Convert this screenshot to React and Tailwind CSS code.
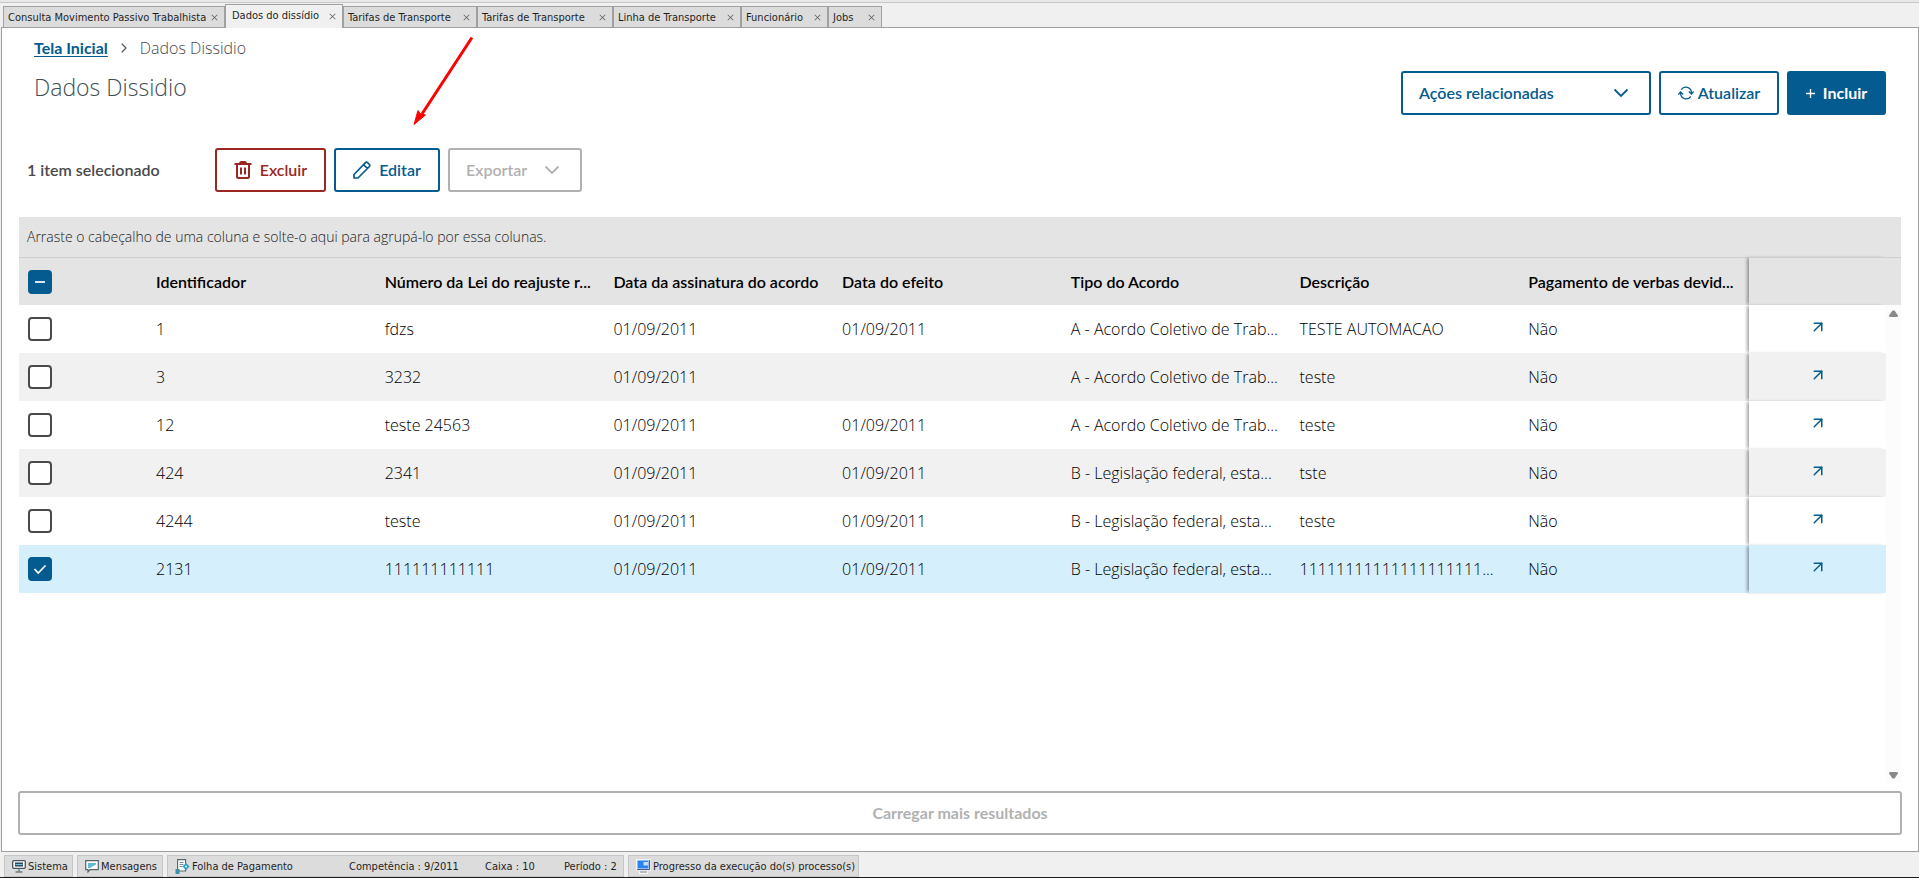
import { FiArrowUpRight } from 'react-icons/fi';
import { VscChromeClose } from 'react-icons/vsc';

const tabs = [
  { label: 'Consulta Movimento Passivo Trabalhista', width: 'w-[222px]' },
  { label: 'Dados do dissídio', width: 'w-[118px]', active: true },
  { label: 'Tarifas de Transporte', width: 'w-[134px]' },
  { label: 'Tarifas de Transporte', width: 'w-[136px]' },
  { label: 'Linha de Transporte', width: 'w-[128px]' },
  { label: 'Funcionário', width: 'w-[87px]' },
  { label: 'Jobs', width: 'w-[54px]' },
];

const columns = [
  'Identificador',
  'Número da Lei do reajuste r...',
  'Data da assinatura do acordo',
  'Data do efeito',
  'Tipo do Acordo',
  'Descrição',
  'Pagamento de verbas devid...',
];

const rows = [
  ['1', 'fdzs', '01/09/2011', '01/09/2011', 'A - Acordo Coletivo de Trab...', 'TESTE AUTOMACAO', 'Não'],
  ['3', '3232', '01/09/2011', '', 'A - Acordo Coletivo de Trab...', 'teste', 'Não'],
  ['12', 'teste 24563', '01/09/2011', '01/09/2011', 'A - Acordo Coletivo de Trab...', 'teste', 'Não'],
  ['424', '2341', '01/09/2011', '01/09/2011', 'B - Legislação federal, esta...', 'tste', 'Não'],
  ['4244', 'teste', '01/09/2011', '01/09/2011', 'B - Legislação federal, esta...', 'teste', 'Não'],
  ['2131', '111111111111', '01/09/2011', '01/09/2011', 'B - Legislação federal, esta...', '11111111111111111111...', 'Não'],
];

const selectedId = '2131';

function Chevron() {
  return (
    <svg width="16" height="10" viewBox="0 0 16 10" fill="none" stroke="currentColor" strokeWidth="1.8">
      <path d="M1.5 1.5 8 8l6.5-6.5" />
    </svg>
  );
}

function TrashIcon() {
  return (
    <svg width="18" height="18" viewBox="0 0 18 18" fill="none" stroke="currentColor" strokeWidth="2">
      <path d="M.5 3h17M3 3v12.5c0 1 .5 1.5 1.5 1.5h9c1 0 1.5-.5 1.5-1.5V3" />
      <path d="M6 2.5C6 1.500 6.500 1 7.500 1h3c1 0 1.500.5 1.500 1.500M7 6.500v7M11 6.500v7" />
    </svg>
  );
}

function PencilIcon() {
  return (
    <svg width="18" height="18" viewBox="0 0 18 18" fill="none" stroke="currentColor" strokeWidth="1.7" strokeLinejoin="round">
      <path d="M1 17v-3.500L12.500 1.600c.6-.6 1.400-.6 2 0l1.900 1.900c.6.6.6 1.400 0 2L5 17H1zM10.500 3.600l3.900 3.900" />
    </svg>
  );
}

function RefreshIcon() {
  return (
    <svg width="16" height="14" viewBox="0 0 16 14" fill="none" stroke="currentColor" strokeWidth="1.3">
      <path d="M3.200 3.600A5.600 5.600 0 0 1 13.400 7M12.800 10.400A5.600 5.600 0 0 1 2.600 7" />
      <path d="M10.800 5.600l2.600 2.400 2.200-2.600M.4 8.600L2.600 6l2.600 2.400" />
    </svg>
  );
}

function MonitorIcon() {
  return (
    <svg width="14" height="13" viewBox="0 0 14 13">
      <rect x=".7" y=".7" width="12.6" height="7.6" rx="1" fill="#fff" stroke="#46535c" strokeWidth="1.3" />
      <rect x="3" y="2.5" width="8" height="4" fill="#2b4a5c" />
      <path d="M3.500 4.500h7" stroke="#6fc0dc" />
      <path d="M7 8.500v3M3.500 12h7" stroke="#6b7a83" strokeWidth="1.4" />
    </svg>
  );
}

function MessageIcon() {
  return (
    <svg width="14" height="13" viewBox="0 0 14 13">
      <path d="M.7.7h12.600v9H5L3 12V9.700H.7z" fill="#fff" stroke="#54646d" strokeWidth="1.2" />
      <path d="M3 3h8v1.500L5 8H3z" fill="#62b9d3" />
    </svg>
  );
}

function PayrollIcon() {
  return (
    <svg width="15" height="15" viewBox="0 0 15 15">
      <path d="M2.600.6h8V12h-8z" fill="#fff" stroke="#54646d" strokeWidth="1.1" />
      <path d="M4.500 3.500h4M4.500 5.500h4M4.500 7.500h3" stroke="#7c8a92" />
      <path d="M11 4.500 14 7.500l-3 3-3-3z" fill="#18a0c8" stroke="#18a0c8" strokeLinejoin="round" />
      <circle cx="11" cy="7.5" r="1" fill="#fff" />
      <rect x=".5" y="10" width="4" height="5" fill="#3393ad" />
    </svg>
  );
}

function ProgressIcon() {
  return (
    <svg width="15" height="15" viewBox="0 0 15 15">
      <path d="M0 0h15v12h-3v3H3v-3H0z" fill="#f4f6f8" />
      <rect x="1.5" y="1.5" width="11" height="8" fill="#2b84ee" />
      <path d="M7.500 3h4.500v3.500H7.500z" fill="#cfdce8" />
      <path d="M13.600 1v9.600H1" fill="none" stroke="#3d4a78" />
      <path d="M4 13h7" stroke="#b3bcc4" strokeWidth="2" />
    </svg>
  );
}

function TabStrip() {
  return (
    <div className="relative z-10 flex h-6 items-start pl-[3px]">
      {tabs.map((tab, i) => (
        <div
          key={i}
          className={`flex items-center justify-between border border-b-0 border-[#a0a0a0] pr-[5px] ${tab.width} ${
            tab.active ? 'h-6 bg-[#f0f0f0] pb-px pl-[6px]' : 'mt-[2px] h-[21px] bg-[#dcdcdc] pt-px pl-1'
          }`}
        >
          <button className="whitespace-nowrap text-[#1f1f1f]">{tab.label}</button>
          <button aria-label="Fechar" className="text-[#5c5c5c]">
            <VscChromeClose size={9} />
          </button>
        </div>
      ))}
    </div>
  );
}

function Header() {
  return (
    <div className="flex items-start justify-between px-8">
      <div>
        <nav className="flex items-center pt-2 leading-6">
          <a href="#" className="font-['Lato',sans-serif] font-bold text-[#045b8f] underline underline-offset-2">
            Tela Inicial
          </a>
          <svg className="mx-[13px] text-[#5a5a5a]" width="6" height="10" viewBox="0 0 6 10" fill="none" stroke="currentColor" strokeWidth="1.3">
            <path d="M.8.8 5 5 .8 9.200" />
          </svg>
          <span className="font-light text-[#4a4a4a]">Dados Dissidio</span>
        </nav>
        <h1 className="pt-[11px] text-[23px] leading-8 font-light text-[#3f4f55]">Dados Dissidio</h1>
      </div>
      <div className="flex gap-2 pt-[43px] font-['Lato',sans-serif] font-semibold text-[#045b8f]">
        <button className="flex h-11 w-[250px] items-center justify-between rounded-[3px] border-2 border-[#045b8f] pr-5 pl-4">
          Ações relacionadas
          <Chevron />
        </button>
        <button className="flex h-11 w-[120px] items-center justify-center gap-1 rounded-[3px] border-2 border-[#045b8f]">
          <RefreshIcon />
          Atualizar
        </button>
        <button className="flex h-11 w-[99px] items-center justify-center gap-2 rounded-[3px] bg-[#045b8f] font-bold text-white">
          <svg width="9" height="9" viewBox="0 0 9 9" stroke="currentColor" strokeWidth="1.3">
            <path d="M4.500 0v9M0 4.500h9" />
          </svg>
          Incluir
        </button>
      </div>
    </div>
  );
}

function Toolbar() {
  return (
    <div className="flex items-center gap-2 pt-[33px] pb-[25px] pl-[25px] font-['Lato',sans-serif] font-semibold">
      <span className="w-[180px] text-[#4a4a4a]">1 item selecionado</span>
      <button className="flex h-11 w-[111px] items-center justify-center gap-2 rounded-[3px] border-2 border-[#9b2722] text-[#9b2722]">
        <TrashIcon />
        Excluir
      </button>
      <button className="flex h-11 w-[106px] items-center justify-center gap-2 rounded-[3px] border-2 border-[#045b8f] text-[#045b8f]">
        <PencilIcon />
        Editar
      </button>
      <button disabled className="flex h-11 w-[134px] items-center justify-between rounded-[3px] border-2 border-[#b1b1b1] pr-5 pl-4 text-[#b1b1b1]">
        Exportar
        <Chevron />
      </button>
    </div>
  );
}

function Checkbox({ checked, mixed, label }) {
  return (
    <span className="relative block size-6">
      <input
        type="checkbox"
        aria-label={label}
        defaultChecked={checked}
        className="block size-6 appearance-none rounded-[4px] border-2 border-[#4a4a4a] bg-white checked:border-[#045b8f] checked:bg-[#045b8f]"
      />
      {checked && (
        <svg className="pointer-events-none absolute inset-0 text-white" width="24" height="24" viewBox="0 0 24 24" fill="none" stroke="currentColor" strokeWidth="1.7">
          <path d={mixed ? 'M7 12h10' : 'M6.500 12l3.700 4L17.500 8.500'} />
        </svg>
      )}
    </span>
  );
}

function Grid() {
  return (
    <div className="flex flex-1 flex-col">
      <div className="h-10 bg-[#e4e4e4] pl-2 text-[14px] leading-10 font-light text-[#222]">
        Arraste o cabeçalho de uma coluna e solte-o aqui para agrupá-lo por essa colunas.
      </div>
      <div className="flex flex-1 items-stretch">
        <div className="flex-1">
          <table className="w-full table-fixed border-separate border-spacing-0 text-left whitespace-nowrap">
            <thead>
              <tr className="h-12 bg-[#e4e4e4] font-['Lato',sans-serif]">
                <th className="w-[129px] border-t border-[#d0d0d0] pl-[9px]">
                  <Checkbox checked mixed label="Selecionar todos" />
                </th>
                {columns.map((column) => (
                  <th key={column} className="border-t border-[#d0d0d0] px-2 font-semibold text-black">
                    {column}
                  </th>
                ))}
                <th className="w-[137px] border-t border-[#d0d0d0] bg-[#e4e4e4] shadow-[-3px_0_3px_-1px_rgba(0,0,0,0.35)]" />
              </tr>
            </thead>
            <tbody>
              {rows.map((row, i) => {
                const selected = row[0] === selectedId;
                const bg = selected ? 'bg-[#d6effd]' : i % 2 ? 'bg-[#f1f1f1]' : 'bg-white';
                return (
                  <tr key={row[0]} className={`h-12 ${bg}`}>
                    <td className="pl-[9px]">
                      <Checkbox checked={selected} label={`Selecionar ${row[0]}`} />
                    </td>
                    {row.map((value, j) => (
                      <td key={j} className="px-2 font-light text-black">
                        {value}
                      </td>
                    ))}
                    <td className={`pb-1 shadow-[-3px_0_3px_-1px_rgba(0,0,0,0.35)] ${bg}`}>
                      <a href="#" aria-label="Abrir" className="flex justify-center text-[#045b8f]">
                        <FiArrowUpRight size={18} />
                      </a>
                    </td>
                  </tr>
                );
              })}
            </tbody>
          </table>
        </div>
        <div className="flex w-[15px] flex-col items-center bg-[#fcfcfc] pb-1 text-[#8a8a8a]">
          <div className="mb-[5px] h-12 w-full border-t border-[#d0d0d0] bg-[#e4e4e4]" />
          <svg width="9" height="7" viewBox="0 0 9 7" fill="currentColor">
            <path d="M3.500.5h2L9 5.500 8.500 7h-8L0 5.500z" />
          </svg>
          <div className="flex-1" />
          <svg width="9" height="7" viewBox="0 0 9 7" fill="currentColor">
            <path d="M3.500 6.500h2L9 1.500 8.500 0h-8L0 1.500z" />
          </svg>
        </div>
      </div>
    </div>
  );
}

function StatusBar() {
  const item = 'flex h-[22px] items-center border border-[#c6c6c6] bg-[#dcdcdc] pt-px pl-[7px] whitespace-nowrap gap-[2px]';
  return (
    <footer className="flex gap-1 border-b border-[#1c1c1c] pt-[3px] pl-1 text-[#1f1f1f]">
      <button className={`${item} w-[69px]`}>
        <MonitorIcon />
        Sistema
      </button>
      <button className={`${item} w-[86px]`}>
        <MessageIcon />
        Mensagens
      </button>
      <button className={`${item} w-[457px]`}>
        <PayrollIcon />
        <span className="w-[155px] text-left">Folha de Pagamento</span>
        <span className="w-[134px] text-left">Competência : 9/2011</span>
        <span className="w-[77px] text-left">Caixa : 10</span>
        <span>Período : 2</span>
      </button>
      <button className={`${item} w-[231px]`}>
        <ProgressIcon />
        Progresso da execução do(s) processo(s)
      </button>
    </footer>
  );
}

export default function App() {
  return (
    <div className="relative flex min-h-screen flex-col bg-[#f0f0f0] font-['DejaVu_Sans_Condensed','DejaVu_Sans',sans-serif] text-[11px] leading-4">
      <div className="mb-px h-[3px] border-b border-[#c8c8c8] bg-[#e8e8e8]" />
      <TabStrip />
      <main className="-mt-px ml-px flex flex-1 flex-col border border-[#a0a0a0] bg-white font-['Open_Sans',sans-serif] text-[16px] leading-6">
        <Header />
        <Toolbar />
        <div className="flex flex-1 flex-col px-[17px]">
          <Grid />
          <button disabled className="-mx-px mt-2 mb-4 h-11 rounded-[3px] border-2 border-[#b1b1b1] font-['Lato',sans-serif] font-bold text-[#b1b1b1]">
            Carregar mais resultados
          </button>
        </div>
      </main>
      <StatusBar />

      {/* red arrow pointing to Editar */}
      <svg className="pointer-events-none absolute top-9 left-[412px]" width="62" height="90" viewBox="0 0 62 90">
        <path d="M60 1.500 10 78" stroke="#fe0000" strokeWidth="3" />
        <path d="M2 88.500 6 74.500 8 77.500 13.500 79z" fill="#fe0000" stroke="#fe0000" />
      </svg>
    </div>
  );
}
